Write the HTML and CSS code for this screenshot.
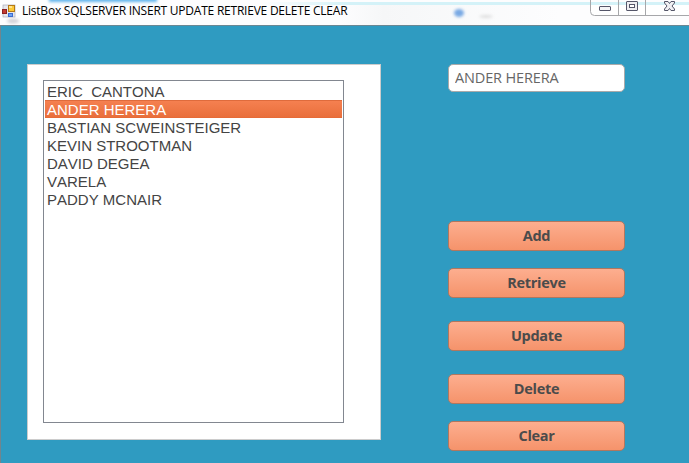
FILE: index.html
```html
<!DOCTYPE html>
<html lang="en">
<head>
<meta charset="utf-8">
<title>ListBox SQLSERVER INSERT UPDATE RETRIEVE DELETE CLEAR</title>
<link rel="stylesheet" href="styles.css">
</head>
<body>
<div class="window">
  <header class="titlebar">
    <svg class="glass" width="689" height="25" aria-hidden="true">
      <defs>
        <filter id="soft" x="-50%" y="-100%" width="200%" height="300%"><feGaussianBlur stdDeviation="1.6"/></filter>
        <linearGradient id="haze"><stop offset="0" stop-color="#dff4fa" stop-opacity="0"/><stop offset=".2" stop-color="#d4f2f8"/><stop offset="1" stop-color="#d4f2f8"/></linearGradient>
        <linearGradient id="tint"><stop offset="0" stop-color="#f6f7f8" stop-opacity="0"/><stop offset=".2" stop-color="#f6f7f8"/><stop offset="1" stop-color="#f6f7f8" stop-opacity="0"/></linearGradient>
      </defs>
      <rect x="340" y="5" width="220" height="20" fill="url(#tint)"/>
      <rect x="260" y="2" width="429" height="3" fill="url(#haze)"/>
      <rect x="49" y="-5" width="108" height="7" fill="#64b5ec" filter="url(#soft)"/>
      <ellipse cx="459" cy="13" rx="5" ry="4" fill="#78a9e4" filter="url(#soft)"/>
      <ellipse cx="486" cy="16.500" rx="7" ry="1.500" fill="#dedede" filter="url(#soft)"/>
      <ellipse cx="13" cy="21" rx="6" ry="2.500" fill="#d2d2d8" filter="url(#soft)"/>
    </svg>
    <svg class="app-icon" width="14" height="14" viewBox="0 0 14 14" aria-hidden="true">
      <rect x="1" y="1" width="12" height="12" fill="#e6e7ed" stroke="#a9adba" stroke-width=".7"/>
      <rect x="6.500" y="1.500" width="6" height="6" fill="#fcc937" stroke="#b57a16"/>
      <rect x="7" y="2" width="3" height="2" fill="#ffe38c"/>
      <rect x=".5" y="5.500" width="4" height="4" fill="#c33b31" stroke="#8d2020"/>
      <rect x="6.500" y="9.500" width="4" height="3" fill="#6ea4f4" stroke="#3c6bd0"/>
    </svg>
    <h1 class="title">ListBox SQLSERVER INSERT UPDATE RETRIEVE DELETE CLEAR</h1>
    <svg class="controls" width="99" height="17" aria-hidden="true">
      <path d="M.5 -1V11.500Q.5 15.500 4.500 15.500H100M28.500 0V15M55.500 0V15" fill="none" stroke="#a6a7aa"/>
      <rect x="9.500" y="6.500" width="11" height="4" rx=".5" fill="#f4f4f6" stroke="#555669"/>
      <rect x="36.500" y="1.500" width="11" height="9" rx=".5" fill="#ededf0" stroke="#555669"/>
      <rect x="39.500" y="4.500" width="5" height="3" fill="#fff" stroke="#555669"/>
      <path d="M74.500 1.500H78L79.500 3.500L81 1.500H84.500V3L82 6L84.500 9V10.500H81L79.500 8.500L78 10.500H74.500V9L77 6L74.500 3Z" fill="#f0f0f3" stroke="#555669"/>
    </svg>
  </header>
  <main class="client">
    <section class="panel">
      <ul class="listbox">
        <li>ERIC&nbsp; CANTONA</li>
        <li class="selected">ANDER HERERA</li>
        <li>BASTIAN SCWEINSTEIGER</li>
        <li>KEVIN STROOTMAN</li>
        <li>DAVID DEGEA</li>
        <li>VARELA</li>
        <li>PADDY MCNAIR</li>
      </ul>
    </section>
    <section class="side">
      <input class="field" type="text" value="ANDER HERERA" aria-label="Name">
      <button class="btn add">Add</button>
      <button class="btn">Retrieve</button>
      <button class="btn spaced">Update</button>
      <button class="btn spaced">Delete</button>
      <button class="btn">Clear</button>
    </section>
  </main>
</div>
</body>
</html>
```

FILE: styles.css
```css
* { box-sizing: border-box; }

body {
  margin: 0;
  overflow: hidden;
}

.window {
  width: 689px;
  height: 463px;
  display: flex;
  flex-direction: column;
  background: #fff;
}

.titlebar {
  position: relative;
  height: 25px;
  flex: none;
  display: flex;
  align-items: flex-start;
  padding-left: 2px;
  background: #fdfdfe;
}

.glass {
  position: absolute;
  left: 0;
  top: 0;
}

.app-icon {
  position: relative;
  margin-top: 4px;
}

.title {
  position: relative;
  margin: 2px 0 0 6px;
  font: 400 12px/17px "Open Sans", "Noto Sans", sans-serif;
  letter-spacing: -0.23px;
  white-space: nowrap;
  color: #000;
}

.controls {
  position: relative;
  margin-left: auto;
  background: linear-gradient(#fff, #fff) 1px 5px / 99px 10px no-repeat;
}

.client {
  flex: 1;
  display: flex;
  align-items: flex-start;
  padding: 38px 0 0 26px;
  border-top: 1px solid #6a8793;
  border-left: 1px solid #71858e;
  background: #2f9bc1;
}

.panel {
  width: 354px;
  height: 376px;
  padding: 15px;
  border: 1px solid #ccc;
  background: #fff;
}

.listbox {
  width: 301px;
  height: 343px;
  margin: 0;
  padding: 1px;
  border: 1px solid #828790;
  list-style: none;
  font: 15px/20px "Liberation Sans", Arial, sans-serif;
  font-kerning: none;
  color: #444;
}

.listbox li {
  height: 18px;
  padding-left: 2px;
  white-space: nowrap;
}

.listbox .selected {
  border-top: 1px solid #df6b3c;
  border-bottom: 1px solid #e66b38;
  line-height: 18px;
  color: #fff;
  background: linear-gradient(#f58050, #e96f3c);
}

.side {
  width: 177px;
  margin-left: 67px;
  display: flex;
  flex-direction: column;
}

.field {
  height: 28px;
  padding: 0 6px 1px;
  border: 1px solid #aaa;
  border-radius: 5px;
  background: #fff;
  color: #666;
  font: 14.5px "Open Sans", "Noto Sans", sans-serif;
  letter-spacing: -0.15px;
}

.btn {
  height: 30px;
  margin: 17px 0 0;
  padding: 0 0 1px;
  border: 1px solid #b0775f;
  border-radius: 5px;
  background: linear-gradient(#fdae8f, #f5936b);
  color: #4b4b4b;
  font: 700 14.5px "Open Sans", "Noto Sans", sans-serif;
  letter-spacing: -0.3px;
}

.btn.add { margin-top: 129px; }
.btn.spaced { margin-top: 23px; }
```
